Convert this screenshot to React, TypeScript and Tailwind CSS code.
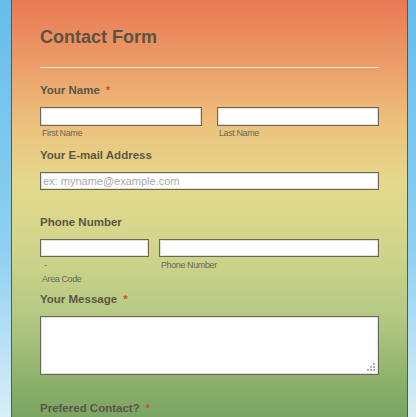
import React from "react";

const labelCls = "text-[11.5px] leading-[14px] font-bold text-[#5a5546]";
const inputCls =
  "bg-white border border-[#6d6656] shadow-[inset_0_0_0_1px_#e2e0d8]";
const subCls = "text-[9px] leading-[11px] tracking-[-0.4px] text-[#6a6656]";

const Star = () => <span className="text-[#d9482a] ml-[6px]">*</span>;

const App = () => {
  return (
    <div
      className="w-[416px] h-[417px] overflow-hidden flex pl-[11px] pr-[8px] bg-[linear-gradient(to_bottom,#66bdea_0%,#8fd0f2_60%,#d9eef7_100%)]"
      style={{ fontFamily: '"Liberation Sans", Arial, sans-serif' }}
    >
      <div className="flex-1 flex flex-col border-x border-[#7a4b3a] px-[28px] bg-[linear-gradient(to_bottom,#e97a54_0%,#eb9c68_15%,#ecc27d_30%,#e4d98b_44%,#d0d58b_60%,#b3c983_76%,#8bb06a_92%,#7aa462_100%)]">
        {/* Header */}
        <h1 className="pt-[27px] text-[18px] leading-[21px] font-bold text-[#5b5144]">
          Contact Form
        </h1>
        <div className="mt-[19px] h-px bg-[#f6ead2]"></div>

        {/* Name */}
        <div className={`${labelCls} mt-[15px]`}>
          Your Name
          <Star />
        </div>
        <div className="flex gap-[15px] mt-[10px]">
          <div className="flex flex-col w-[162px]">
            <div className={`${inputCls} h-[19px]`}></div>
            <span className={`${subCls} mt-[2px] pl-[2px]`}>First Name</span>
          </div>
          <div className="flex flex-col flex-1">
            <div className={`${inputCls} h-[19px]`}></div>
            <span className={`${subCls} mt-[2px] pl-[2px]`}>Last Name</span>
          </div>
        </div>

        {/* Email */}
        <div className={`${labelCls} mt-[9px]`}>Your E-mail Address</div>
        <div
          className={`${inputCls} h-[18px] mt-[10px] flex items-center px-[2px] text-[11px] text-[#a9a9a9]`}
        >
          ex: myname@example.com
        </div>

        {/* Phone */}
        <div className={`${labelCls} mt-[25px]`}>Phone Number</div>
        <div className="flex gap-[10px] mt-[10px]">
          <div className="flex flex-col w-[109px]">
            <div className={`${inputCls} h-[18px]`}></div>
            <span className={`${subCls} mt-[3px] pl-[4px]`}>-</span>
            <span className={`${subCls} mt-[3px] pl-[2px]`}>Area Code</span>
          </div>
          <div className="flex flex-col flex-1">
            <div className={`${inputCls} h-[18px]`}></div>
            <span className={`${subCls} mt-[3px] pl-[2px]`}>Phone Number</span>
          </div>
        </div>

        {/* Message */}
        <div className={`${labelCls} mt-[7px]`}>
          Your Message
          <Star />
        </div>
        <div className={`${inputCls} relative h-[59px] mt-[10px]`}>
          <svg
            className="absolute right-[2px] bottom-[2px]"
            width="10"
            height="10"
            viewBox="0 0 10 10"
          >
            <g fill="#b0b0b0">
              <rect x="7" y="1" width="2" height="2" />
              <rect x="4" y="4" width="2" height="2" />
              <rect x="7" y="4" width="2" height="2" />
              <rect x="1" y="7" width="2" height="2" />
              <rect x="4" y="7" width="2" height="2" />
              <rect x="7" y="7" width="2" height="2" />
            </g>
          </svg>
        </div>

        {/* Prefered contact */}
        <div className={`${labelCls} mt-[26px]`}>
          Prefered Contact?
          <Star />
        </div>
      </div>
    </div>
  );
};

export default App;
